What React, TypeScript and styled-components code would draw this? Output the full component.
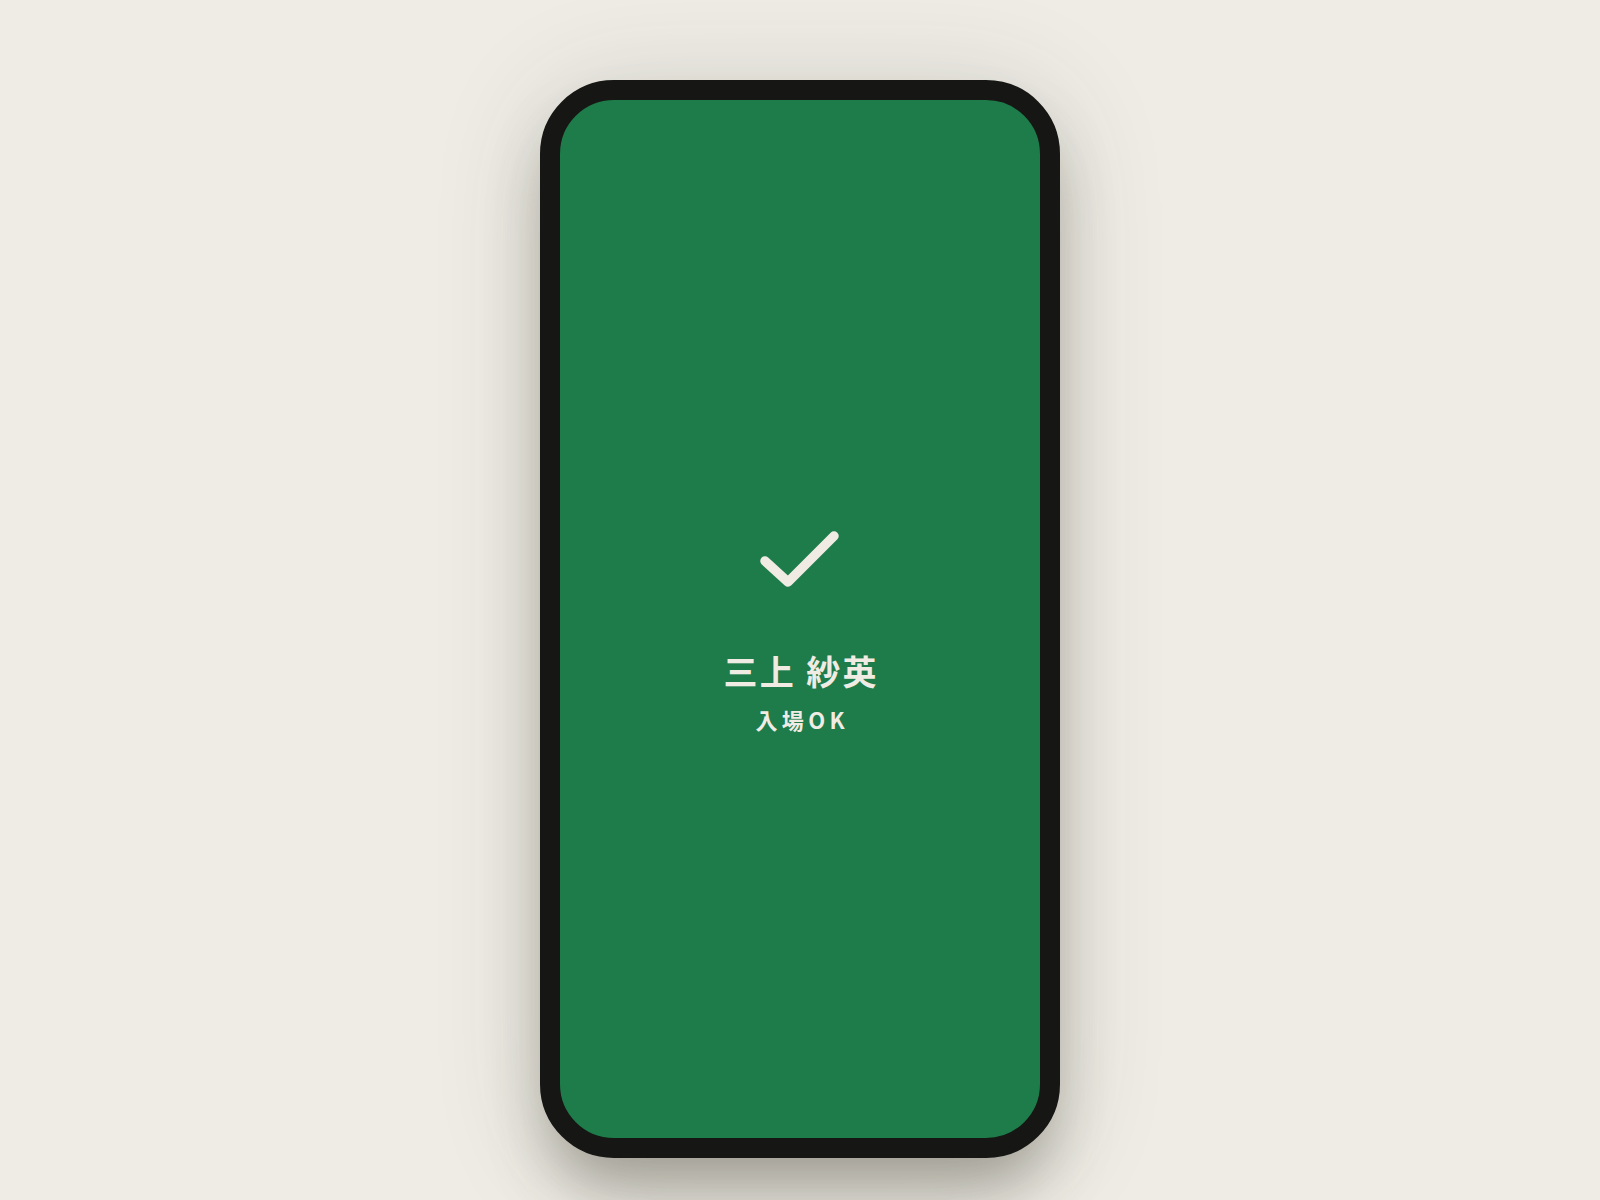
import styled, { createGlobalStyle } from 'styled-components';

const GlobalStyle = createGlobalStyle`
  html, body {
    margin: 0;
    padding: 0;
    background: #eeece5;
  }
  body {
    font-family: "Noto Sans CJK JP", "Noto Sans", sans-serif;
  }
`;

const Stage = styled.main`
  width: 1600px;
  height: 1200px;
  box-sizing: border-box;
  padding-top: 80px;
  display: flex;
  justify-content: center;
  align-items: flex-start;
  overflow: hidden;
  background: #eeece5;
`;

const Phone = styled.div`
  width: 520px;
  height: 1078px;
  box-sizing: border-box;
  border: 20px solid #161614;
  border-radius: 74px;
  background: #1e7b4a;
  box-shadow: 0 40px 60px -10px rgba(60, 58, 45, 0.38), 0 10px 110px rgba(60, 58, 45, 0.16);
  display: flex;
  flex-direction: column;
  align-items: center;
  justify-content: center;
  padding-top: 20px;
`;

const CheckMark = styled.svg`
  display: block;
  width: 84px;
  height: 60px;
`;

const Name = styled.h1`
  margin: 65px 0 0;
  font-size: 34px;
  line-height: 1;
  font-weight: 700;
  letter-spacing: 0.07em;
  padding-left: 0.07em;
  color: #f0ece4;
`;

const Status = styled.p`
  margin: 20px 0 0;
  font-size: 22px;
  line-height: 1;
  font-weight: 700;
  letter-spacing: 0.2em;
  padding-left: 0.2em;
  color: #f0ece4;
`;

export default function App() {
  return (
    <>
      <GlobalStyle />
      <Stage>
        <Phone>
          <CheckMark viewBox="0 0 84 60" fill="none">
            <path
              d="M7 32 L30 53 L76 7"
              stroke="#f0ece4"
              strokeWidth="9.5"
              strokeLinecap="round"
              strokeLinejoin="round"
            />
          </CheckMark>
          <Name>三上 紗英</Name>
          <Status>入場OK</Status>
        </Phone>
      </Stage>
    </>
  );
}
